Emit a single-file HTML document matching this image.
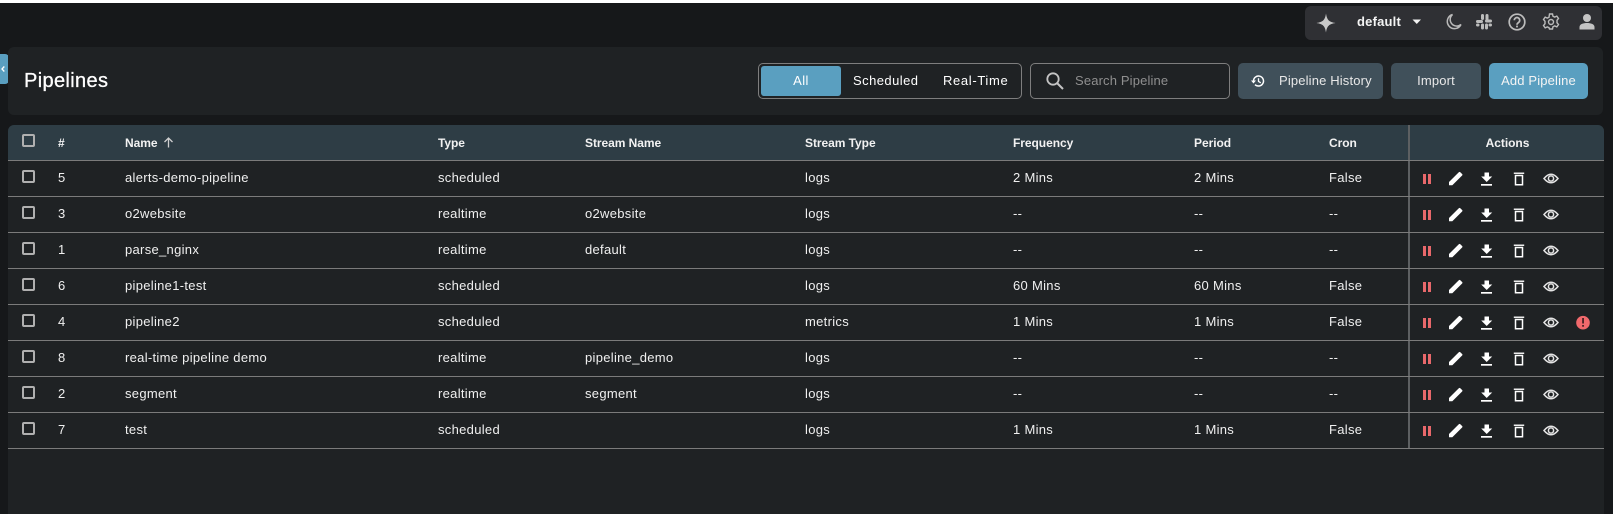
<!DOCTYPE html>
<html><head><meta charset="utf-8"><style>
html,body{margin:0;padding:0;width:1613px;height:514px;overflow:hidden;background:#16181a;font-family:"Liberation Sans",sans-serif;color:#f0f0f0}
.a{position:absolute}
#w{position:relative;width:1613px;height:514px;overflow:hidden}
.t{position:absolute;font-size:13px;line-height:16px;white-space:nowrap;letter-spacing:.3px}
.h{font-weight:bold;font-size:12px;color:#f2f2f2;letter-spacing:-.05px}
.l{position:absolute;left:8px;width:1596px;height:1px;background:#7b7b7b}
.c{position:absolute;left:22px;width:9px;height:9px;border:2px solid #b0b0b0;border-radius:2px}
.btn{position:absolute;top:63px;height:36px;line-height:36px;border-radius:5px;text-align:center;font-size:13px;color:#e8e8e8;letter-spacing:.15px}
svg{position:absolute;overflow:visible}
</style></head><body><div id="w">
<svg width="0" height="0" style="position:absolute"><defs>
<g id="acts">
<rect x="1423" y="-5" width="3" height="10" fill="#e8686b"/><rect x="1428" y="-5" width="3" height="10" fill="#e8686b"/>
<path d="M1449 6.300v-3.300l9.800-9.800c.5-.5 1-.5 1.500 0l1.800 1.800c.5.500.5 1 0 1.500l-9.800 9.800z" fill="#fff"/>
<path d="M1484.500-6.500h4.500v4h3.200l-5.500 5.500-5.500-5.500h3.300z" fill="#fff"/><rect x="1481" y="5" width="11" height="1.700" fill="#fff"/>
<path d="M1515.500-3.500h7v9.300h-7z" fill="none" stroke="#fff" stroke-width="1.500"/><rect x="1513.800" y="-6.500" width="10.400" height="1.500" fill="#eee"/>
<path d="M1544-.5q7-8.500 14 0q-7 8.500-14 0z" fill="none" stroke="#e4e4e4" stroke-width="1.500"/><circle cx="1551" cy="-.5" r="2.600" fill="none" stroke="#e4e4e4" stroke-width="1.500"/>
</g>
</defs></svg>

<div class="a" style="left:0;top:0;width:1613px;height:3px;background:#fff"></div>
<div class="a" style="left:0;top:54px;width:8.500px;height:30px;background:#5a9fc0;border-radius:0 4px 4px 0"></div>
<svg style="left:0;top:54px" width="9" height="30"><path d="M4.300 12.500L2 15l2.300 2.500" fill="none" stroke="#fff" stroke-width="1.300"/></svg>

<!-- top bar -->
<div class="a" style="left:1305px;top:6px;width:297px;height:34px;background:#2f3034;border-radius:6px"></div>
<svg style="left:1315px;top:12px" width="22" height="22"><path d="M11 1.500C12 8 14 10 20.500 11 14 12 12 14 11 20.500 10 14 8 12 1.500 11 8 10 10 8 11 1.500z" fill="#c8c8c8"/></svg>
<div class="t" style="left:1357px;top:14px;font-size:13px;font-weight:bold;color:#f4f4f4;letter-spacing:.2px">default</div>
<svg style="left:1412px;top:19px" width="10" height="6"><path d="M.5.500h8.500L4.750 5z" fill="#f2f2f2"/></svg>
<svg style="left:1445px;top:13px" width="18" height="18"><path d="M7.500 1.500A7.200 7.200 0 1 0 16 11.500 6.500 6.500 0 0 1 7.500 1.500z" fill="none" stroke="#b9b9b9" stroke-width="1.500"/></svg>
<svg style="left:1475px;top:13px" width="18" height="18" fill="#bcbcbc"><rect x="6" y="1" width="3" height="6" rx="1.500"/><rect x="1" y="7" width="7" height="3" rx="1.500"/><rect x="9.500" y="1" width="3" height="6.500" rx="1.500" transform="translate(1 0)"/><rect x="10" y="6.500" width="7" height="3" rx="1.500"/><rect x="6" y="10.500" width="3" height="6" rx="1.500"/><rect x="1" y="10.500" width="3.500" height="3" rx="1.500"/><rect x="10" y="10.500" width="3" height="6" rx="1.500"/><rect x="13.500" y="10.500" width="3.500" height="3" rx="1.500"/></svg>
<svg style="left:1508px;top:13px" width="18" height="18"><circle cx="9" cy="9" r="7.800" fill="none" stroke="#bcbcbc" stroke-width="1.700"/><path d="M6.300 7.200a2.700 2.700 0 1 1 4.300 2.200c-1 .7-1.600 1.200-1.600 2.300" fill="none" stroke="#bcbcbc" stroke-width="1.700"/><rect x="8.100" y="12.600" width="1.800" height="1.800" fill="#bcbcbc"/></svg>
<svg style="left:1542px;top:13px" width="18" height="18"><circle cx="9" cy="9" r="2.500" fill="none" stroke="#bcbcbc" stroke-width="1.400"/><path d="M7.500 1h3l.5 2.300 1.700.8 2.100-1 1.700 2.400-1.500 1.800v2.400l1.500 1.800-1.700 2.400-2.100-1-1.700.8-.5 2.300h-3L7 14.700l-1.700-.8-2.100 1-1.700-2.400L3 10.700V8.300L1.500 6.500l1.700-2.400 2.100 1L7 4.300z" fill="none" stroke="#bcbcbc" stroke-width="1.400"/></svg>
<svg style="left:1578px;top:13px" width="18" height="18" fill="#c4c4c4"><circle cx="9" cy="5" r="4"/><path d="M1.500 16.500v-2.500c0-3 4-4 7.500-4s7.500 1 7.500 4v2.500z"/></svg>

<!-- title card -->
<div class="a" style="left:8px;top:47px;width:1595px;height:68px;background:#1f2224;border-radius:6px"></div>
<div class="t" style="left:24px;top:69px;font-size:20px;line-height:24px;font-weight:normal;color:#fff;letter-spacing:.35px;-webkit-text-stroke:.3px #fff">Pipelines</div>

<div class="a" style="left:758px;top:63px;width:262px;height:34px;border:1px solid #7e7e7e;border-radius:5px"></div>
<div class="a" style="left:761px;top:66px;width:80px;height:30px;background:#5a9fc0;border-radius:3px"></div>
<div class="t" style="left:761px;width:80px;text-align:center;top:73px;color:#fff;letter-spacing:.45px">All</div>
<div class="t" style="left:853px;top:73px;color:#fff;letter-spacing:.45px">Scheduled</div>
<div class="t" style="left:943px;top:73px;color:#fff;letter-spacing:.65px">Real-Time</div>

<div class="a" style="left:1030px;top:63px;width:198px;height:34px;border:1px solid #7e7e7e;border-radius:5px"></div>
<svg style="left:1045px;top:71px" width="20" height="20"><circle cx="8" cy="8" r="5.700" fill="none" stroke="#c4c4c4" stroke-width="1.800"/><path d="M12 12l6 6" stroke="#c4c4c4" stroke-width="2"/></svg>
<div class="t" style="left:1075px;top:73px;color:#8f8f8f;letter-spacing:.15px">Search Pipeline</div>

<div class="btn" style="left:1238px;width:145px;background:#40505a;text-align:left;text-indent:41px">Pipeline History</div>
<svg style="left:1251px;top:74px" width="14" height="14"><path d="M2.500 7a5 5 0 1 1 1.500 3.600" fill="none" stroke="#fff" stroke-width="1.500"/><path d="M0 6.500h5L2.500 9.500z" fill="#fff"/><path d="M7.500 4.200v3.200l2.300 1.400" fill="none" stroke="#fff" stroke-width="1.300"/></svg>
<div class="btn" style="left:1391px;width:90px;background:#40505a">Import</div>
<div class="btn" style="left:1489px;width:99px;background:#5a9fc0;color:#f4f4f4">Add Pipeline</div>

<!-- table -->
<div class="a" style="left:8px;top:125px;width:1596px;height:389px;background:#1f2224;border-radius:6px 6px 0 0"></div>
<div class="a" style="left:8px;top:125px;width:1596px;height:35px;background:#2e3d45;border-radius:6px 6px 0 0"></div>
<div class="a" style="left:1408px;top:125px;width:2px;height:323px;background:#5d6062"></div>
<div class="l" style="top:160px"></div><div class="l" style="top:196px"></div><div class="l" style="top:232px"></div><div class="l" style="top:268px"></div><div class="l" style="top:304px"></div><div class="l" style="top:340px"></div><div class="l" style="top:376px"></div><div class="l" style="top:412px"></div><div class="l" style="top:448px"></div>

<div class="c" style="top:134px"></div>
<div class="t h" style="left:58px;top:135px">#</div>
<div class="t h" style="left:125px;top:135px">Name</div>
<svg style="left:163px;top:137px" width="11" height="11"><path d="M5.500 10.500V1M1.500 5l4-4 4 4" fill="none" stroke="#d0d0d0" stroke-width="1.300"/></svg>
<div class="t h" style="left:438px;top:135px">Type</div>
<div class="t h" style="left:585px;top:135px">Stream Name</div>
<div class="t h" style="left:805px;top:135px">Stream Type</div>
<div class="t h" style="left:1013px;top:135px">Frequency</div>
<div class="t h" style="left:1194px;top:135px">Period</div>
<div class="t h" style="left:1329px;top:135px">Cron</div>
<div class="t h" style="left:1410px;width:195px;text-align:center;top:135px">Actions</div>

<!-- rows -->
<div class="c" style="top:170px"></div><div class="t" style="left:58px;top:170px">5</div><div class="t" style="left:125px;top:170px">alerts-demo-pipeline</div><div class="t" style="left:438px;top:170px">scheduled</div><div class="t" style="left:805px;top:170px">logs</div><div class="t" style="left:1013px;top:170px">2 Mins</div><div class="t" style="left:1194px;top:170px">2 Mins</div><div class="t" style="left:1329px;top:170px">False</div>
<svg style="left:0;top:0" width="1613" height="514"><use href="#acts" y="179"/><use href="#acts" y="215"/><use href="#acts" y="251"/><use href="#acts" y="287"/><use href="#acts" y="323"/><use href="#acts" y="359"/><use href="#acts" y="395"/><use href="#acts" y="431"/>
<circle cx="1583" cy="322.700" r="6.800" fill="#f0696c"/><rect x="1582.200" y="318" width="1.700" height="5.500" fill="#3a1f20"/><rect x="1582.200" y="325" width="1.700" height="1.700" fill="#3a1f20"/></svg>

<div class="c" style="top:206px"></div><div class="t" style="left:58px;top:206px">3</div><div class="t" style="left:125px;top:206px">o2website</div><div class="t" style="left:438px;top:206px">realtime</div><div class="t" style="left:585px;top:206px">o2website</div><div class="t" style="left:805px;top:206px">logs</div><div class="t" style="left:1013px;top:206px">--</div><div class="t" style="left:1194px;top:206px">--</div><div class="t" style="left:1329px;top:206px">--</div>

<div class="c" style="top:242px"></div><div class="t" style="left:58px;top:242px">1</div><div class="t" style="left:125px;top:242px">parse_nginx</div><div class="t" style="left:438px;top:242px">realtime</div><div class="t" style="left:585px;top:242px">default</div><div class="t" style="left:805px;top:242px">logs</div><div class="t" style="left:1013px;top:242px">--</div><div class="t" style="left:1194px;top:242px">--</div><div class="t" style="left:1329px;top:242px">--</div>

<div class="c" style="top:278px"></div><div class="t" style="left:58px;top:278px">6</div><div class="t" style="left:125px;top:278px">pipeline1-test</div><div class="t" style="left:438px;top:278px">scheduled</div><div class="t" style="left:805px;top:278px">logs</div><div class="t" style="left:1013px;top:278px">60 Mins</div><div class="t" style="left:1194px;top:278px">60 Mins</div><div class="t" style="left:1329px;top:278px">False</div>

<div class="c" style="top:314px"></div><div class="t" style="left:58px;top:314px">4</div><div class="t" style="left:125px;top:314px">pipeline2</div><div class="t" style="left:438px;top:314px">scheduled</div><div class="t" style="left:805px;top:314px">metrics</div><div class="t" style="left:1013px;top:314px">1 Mins</div><div class="t" style="left:1194px;top:314px">1 Mins</div><div class="t" style="left:1329px;top:314px">False</div>

<div class="c" style="top:350px"></div><div class="t" style="left:58px;top:350px">8</div><div class="t" style="left:125px;top:350px">real-time pipeline demo</div><div class="t" style="left:438px;top:350px">realtime</div><div class="t" style="left:585px;top:350px">pipeline_demo</div><div class="t" style="left:805px;top:350px">logs</div><div class="t" style="left:1013px;top:350px">--</div><div class="t" style="left:1194px;top:350px">--</div><div class="t" style="left:1329px;top:350px">--</div>

<div class="c" style="top:386px"></div><div class="t" style="left:58px;top:386px">2</div><div class="t" style="left:125px;top:386px">segment</div><div class="t" style="left:438px;top:386px">realtime</div><div class="t" style="left:585px;top:386px">segment</div><div class="t" style="left:805px;top:386px">logs</div><div class="t" style="left:1013px;top:386px">--</div><div class="t" style="left:1194px;top:386px">--</div><div class="t" style="left:1329px;top:386px">--</div>

<div class="c" style="top:422px"></div><div class="t" style="left:58px;top:422px">7</div><div class="t" style="left:125px;top:422px">test</div><div class="t" style="left:438px;top:422px">scheduled</div><div class="t" style="left:805px;top:422px">logs</div><div class="t" style="left:1013px;top:422px">1 Mins</div><div class="t" style="left:1194px;top:422px">1 Mins</div><div class="t" style="left:1329px;top:422px">False</div>
</div></body></html>
